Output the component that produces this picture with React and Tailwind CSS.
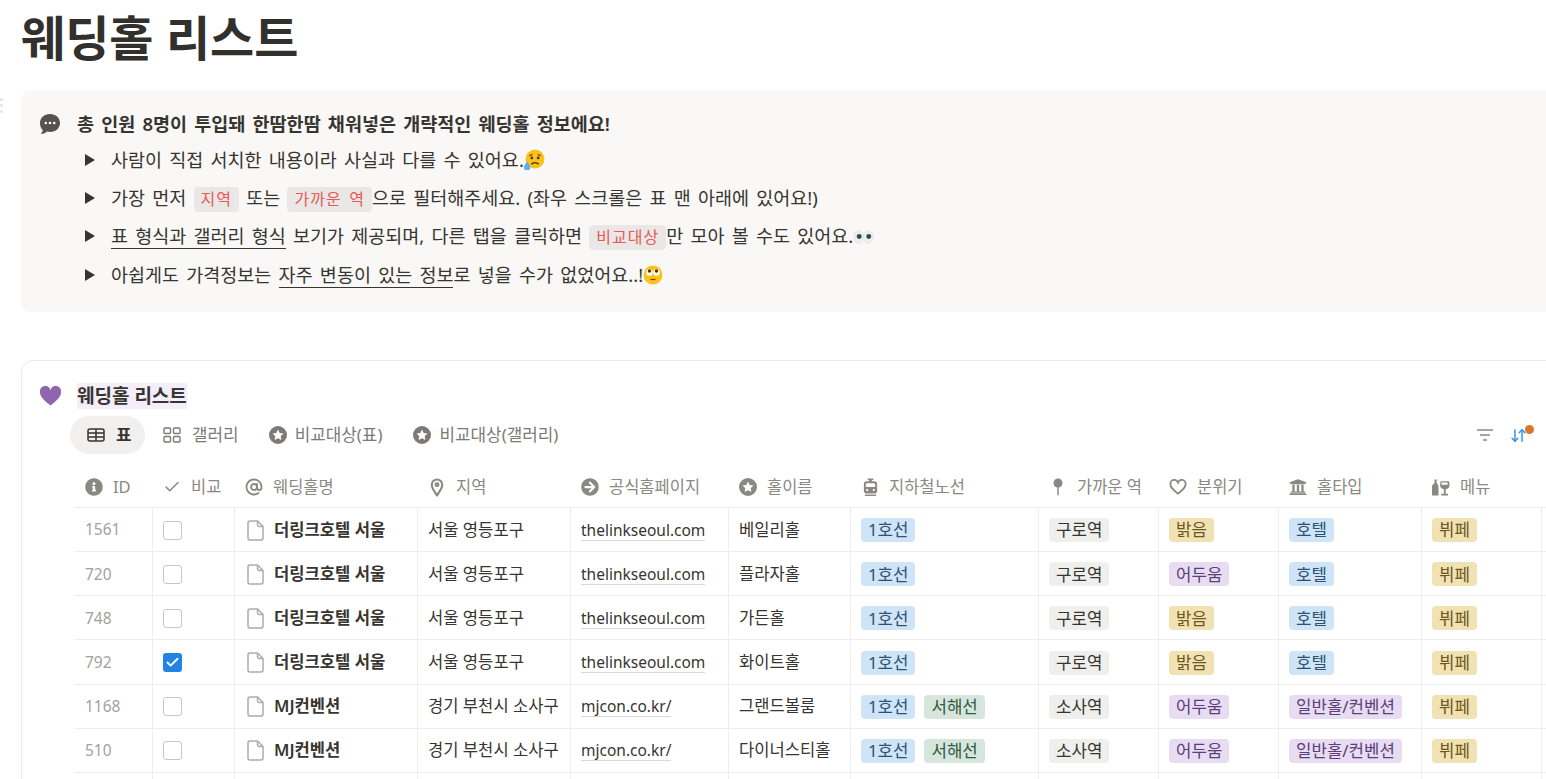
import { Check, AtSign, ArrowDownUp } from "lucide-react";
import { FaInfoCircle, FaArrowCircleRight, FaUniversity } from "react-icons/fa";

const font = { fontFamily: '"Noto Sans", "Noto Sans CJK KR", sans-serif' };

const StarCircle = ({ className }) => (
  <svg viewBox="0 0 18 18" className={className} fill="currentColor">
    <path fillRule="evenodd" d="M9 0a9 9 0 1 1 0 18A9 9 0 0 1 9 0Zm0 3.600 1.700 3.500 3.800.5-2.800 2.600.7 3.800L9 12.200 5.600 14l.7-3.800-2.800-2.600 3.800-.5L9 3.600Z" />
  </svg>
);

const TableIcon = () => (
  <svg viewBox="0 0 18 14" className="w-[18px] h-[14px]" fill="none" stroke="#37352f" strokeWidth="1.500">
    <rect x="1" y="1" width="16" height="12" rx="2" />
    <path d="M1 5h16M1 9h16M9 1v12" />
  </svg>
);

const GalleryIcon = () => (
  <svg viewBox="0 0 18 16" className="w-[18px] h-[16px]" fill="none" stroke="#7d7a75" strokeWidth="1.400">
    <rect x="1" y="1" width="6.500" height="5.500" rx="1" />
    <rect x="10.500" y="1" width="6.500" height="5.500" rx="1" />
    <rect x="1" y="9.500" width="6.500" height="5.500" rx="1" />
    <rect x="10.500" y="9.500" width="6.500" height="5.500" rx="1" />
  </svg>
);

const PinIcon = () => (
  <svg viewBox="0 0 14 20" className="w-[14px] h-[19px]" fill="none" stroke="currentColor" strokeWidth="2.200">
    <path d="M7 18.500C4.500 14 1.500 11 1.500 7a5.500 5.500 0 0 1 11 0c0 4-3 7-5.500 11.500Z" strokeLinejoin="round" />
    <circle cx="7" cy="7" r="1.500" />
  </svg>
);

const TrainIcon = () => (
  <svg viewBox="0 0 18 20" className="w-[17px] h-[20px]" fill="currentColor">
    <path fillRule="evenodd" d="M6 1h6v1.500h-1.500V4H13a3 3 0 0 1 3 3v7a3 3 0 0 1-3 3H5a3 3 0 0 1-3-3V7a3 3 0 0 1 3-3h2.500V2.500H6V1ZM4 7.500V10h10V7.500a1.500 1.500 0 0 0-1.500-1.500h-7A1.500 1.500 0 0 0 4 7.500ZM5.500 12a1.200 1.200 0 1 0 0 2.400 1.200 1.200 0 0 0 0-2.400Zm7 0a1.200 1.200 0 1 0 0 2.400 1.200 1.200 0 0 0 0-2.400Z" />
    <path d="M3 18h12v1.500H3z" />
  </svg>
);

const RoundPin = () => (
  <svg viewBox="0 0 12 20" className="w-[12px] h-[18px]" fill="currentColor">
    <circle cx="6" cy="5.500" r="5" />
    <rect x="5.200" y="9" width="1.600" height="10.500" rx="0.800" />
  </svg>
);

const HeartOutline = () => (
  <svg viewBox="0 0 20 18" className="w-[18px] h-[16px]" fill="none" stroke="currentColor" strokeWidth="2">
    <path d="M10 16.500C5 12.500 1.500 10 1.500 6A4.300 4.300 0 0 1 10 4.500 4.300 4.300 0 0 1 18.500 6c0 4-3.500 6.500-8.500 10.500Z" strokeLinejoin="round" />
  </svg>
);

const WineIcon = () => (
  <svg viewBox="0 0 20 20" className="w-[20px] h-[19px]" fill="currentColor">
    <path d="M2.800 1h2.400v4c0 1 2 1.500 2 3.500V18a1 1 0 0 1-1 1H1a1 1 0 0 1-1-1V8.500C0 6.500 2.800 6 2.800 5V1Z" />
    <path fillRule="evenodd" d="M9.500 3h9.500l.5 4a5 5 0 0 1-4.300 5v5h2.600v2H10.300v-2h2.900v-5a5 5 0 0 1-4.200-5l.5-4Zm1.300 1.500-.3 2.500h7l-.3-2.500h-6.400Z" />
  </svg>
);

const DocIcon = () => (
  <svg viewBox="0 0 17 21" className="w-[17px] h-[21px] shrink-0" fill="none" stroke="#aeaba6" strokeWidth="1.500">
    <path d="M3 1h7.500L16 6.500V18a2 2 0 0 1-2 2H3a2 2 0 0 1-2-2V3a2 2 0 0 1 2-2Z" strokeLinejoin="round" />
    <path d="M10.500 1v3.500a2 2 0 0 0 2 2H16" />
  </svg>
);

const SpeechIcon = () => (
  <svg viewBox="0 0 22 22" className="w-[22px] h-[22px] -ml-[1px]">
    <path d="M11 1c5.800 0 10 3.900 10 9s-4.200 9-10 9c-1 0-2-.1-3-.4C6.600 20 4.600 20.900 1.800 21c1-1 1.700-2.300 1.900-3.900C2 15.400 1 13 1 10c0-5.100 4.200-9 10-9Z" fill="#55534e" />
    <circle cx="6.800" cy="10" r="1.300" fill="#fff" />
    <circle cx="11" cy="10" r="1.300" fill="#fff" />
    <circle cx="15.200" cy="10" r="1.300" fill="#fff" />
  </svg>
);

const SadFace = () => (
  <svg viewBox="0 0 20 20" className="w-[21px] h-[21px] inline-block align-[-3px]">
    <circle cx="10.500" cy="9.500" r="9" fill="#fcc21b" />
    <path d="M5 6.500 8 5M16 6.500 13 5" stroke="#7a4a12" strokeWidth="1.200" fill="none" />
    <circle cx="7.500" cy="8.500" r="1.300" fill="#4a3413" />
    <circle cx="13.500" cy="8.500" r="1.300" fill="#4a3413" />
    <path d="M7 14.500c2-2 5-2 7 0" stroke="#4a3413" strokeWidth="1.400" fill="none" />
    <path d="M3 12c2 3 3 4 3 5.500a3 3 0 0 1-6 0C0 16 1.500 14 3 12Z" fill="#5fb0e8" />
  </svg>
);

const EyesEmoji = () => (
  <svg viewBox="0 0 22 14" className="w-[21px] h-[14px] inline-block align-[-1px]">
    <ellipse cx="6" cy="7" rx="5" ry="6.500" fill="#eceff1" stroke="#cfd4d8" strokeWidth="0.500" />
    <ellipse cx="16" cy="7" rx="5" ry="6.500" fill="#eceff1" stroke="#cfd4d8" strokeWidth="0.500" />
    <circle cx="6.500" cy="6.500" r="2.600" fill="#37474f" />
    <circle cx="16.500" cy="6.500" r="2.600" fill="#37474f" />
  </svg>
);

const RollFace = () => (
  <svg viewBox="0 0 20 20" className="w-[20px] h-[20px] inline-block align-[-3px]">
    <circle cx="10" cy="10" r="9.500" fill="#fcc21b" />
    <circle cx="6.500" cy="7.500" r="3.200" fill="#fff" />
    <circle cx="13.500" cy="7.500" r="3.200" fill="#fff" />
    <circle cx="6.500" cy="6" r="1.700" fill="#4a3413" />
    <circle cx="13.500" cy="6" r="1.700" fill="#4a3413" />
    <path d="M7.500 14.500h5" stroke="#7a4a12" strokeWidth="1.200" />
  </svg>
);

const Tri = () => (
  <svg viewBox="0 0 10 12" className="w-[10px] h-[12px] shrink-0">
    <path d="M0 0l10 6-10 6z" fill="#37352f" />
  </svg>
);

const Code = ({ children }) => (
  <span className="inline-block bg-[#e9e8e6] text-[#eb5757] rounded-[4px] px-[7px] h-[25px] leading-[24px] text-[16px] tracking-[1px]">{children}</span>
);

const U = ({ children }) => <span className="border-b border-[#37352f]">{children}</span>;

const colors = {
  blue: "bg-[#cfe4f6] text-[#2b5274]",
  green: "bg-[#d6e6dc] text-[#2f5a43]",
  gray: "bg-[#efefed] text-[#37352f]",
  yellow: "bg-[#f1e2b3] text-[#6d5620]",
  purple: "bg-[#e8dcf2] text-[#5b3f78]",
};

const Pill = ({ c, children }) => (
  <span className={`inline-flex items-center h-[24px] rounded-[4px] px-[7px] text-[16.8px] whitespace-nowrap ${colors[c]}`}>{children}</span>
);

const headers = [
  { w: "w-[78px]", icon: <FaInfoCircle className="w-[18px] h-[18px]" />, label: "ID" },
  { w: "w-[82px]", icon: <Check className="w-[20px] h-[20px]" strokeWidth={2} />, label: "비교" },
  { w: "w-[183px]", icon: <AtSign className="w-[18px] h-[18px]" strokeWidth={2.4} />, label: "웨딩홀명" },
  { w: "w-[153px]", icon: <PinIcon />, label: "지역" },
  { w: "w-[158px]", icon: <FaArrowCircleRight className="w-[18px] h-[18px]" />, label: "공식홈페이지" },
  { w: "w-[122px]", icon: <StarCircle className="w-[18px] h-[18px]" />, label: "홀이름" },
  { w: "w-[188px]", icon: <TrainIcon />, label: "지하철노선" },
  { w: "w-[120px]", icon: <RoundPin />, label: "가까운 역" },
  { w: "w-[120px]", icon: <HeartOutline />, label: "분위기" },
  { w: "w-[143px]", icon: <FaUniversity className="w-[18px] h-[18px]" />, label: "홀타입" },
  { w: "w-[120px]", icon: <WineIcon />, label: "메뉴" },
];

const link = { name: "더링크호텔 서울", area: "서울 영등포구", url: "thelinkseoul.com", lines: ["1호선"], station: "구로역", type: ["blue", "호텔"] };
const mj = { name: "MJ컨벤션", area: "경기 부천시 소사구", url: "mjcon.co.kr/", lines: ["1호선", "서해선"], station: "소사역", type: ["purple", "일반홀/컨벤션"] };

const rows = [
  { ...link, id: 1561, hall: "베일리홀", mood: "밝음" },
  { ...link, id: 720, hall: "플라자홀", mood: "어두움" },
  { ...link, id: 748, hall: "가든홀", mood: "밝음" },
  { ...link, id: 792, hall: "화이트홀", mood: "밝음", checked: true },
  { ...mj, id: 1168, hall: "그랜드볼룸", mood: "어두움" },
  { ...mj, id: 510, hall: "다이너스티홀", mood: "어두움" },
];

function Cell({ w, last, children }) {
  return (
    <div className={`${w} shrink-0 h-full flex items-center pl-[10px] pt-[1px] ${last ? "" : "border-r border-[#eeeeec]"}`}>{children}</div>
  );
}

function Row({ r }) {
  return (
    <div className="flex h-[44.17px] border-b border-[#eeeeec] text-[16.6px] text-[#37352f]">
      <Cell w="w-[78px]"><span className="text-[#a3a19c] text-[15.5px]">{r.id}</span></Cell>
      <Cell w="w-[82px]">
        {r.checked ? (
          <span className="w-[19px] h-[19px] rounded-[3px] bg-[#2383e2] flex items-center justify-center">
            <Check className="w-[15px] h-[15px] text-white" strokeWidth={3} />
          </span>
        ) : (
          <span className="w-[19px] h-[19px] rounded-[3px] border border-[#c9c7c3] bg-white" />
        )}
      </Cell>
      <Cell w="w-[183px]">
        <span className="flex items-center gap-[10px] pl-[2px]"><DocIcon /><span className="font-semibold whitespace-nowrap">{r.name}</span></span>
      </Cell>
      <Cell w="w-[153px]"><span className="whitespace-nowrap">{r.area}</span></Cell>
      <Cell w="w-[158px]"><span className="border-b border-[#d8d7d4] leading-[20px] text-[15.5px]">{r.url}</span></Cell>
      <Cell w="w-[122px]"><span className="whitespace-nowrap">{r.hall}</span></Cell>
      <Cell w="w-[188px]">
        <span className="flex gap-[9px]">
          <Pill c="blue">{r.lines[0]}</Pill>
          {r.lines[1] && <Pill c="green">{r.lines[1]}</Pill>}
        </span>
      </Cell>
      <Cell w="w-[120px]"><Pill c="gray">{r.station}</Pill></Cell>
      <Cell w="w-[120px]"><Pill c={r.mood === "밝음" ? "yellow" : "purple"}>{r.mood}</Pill></Cell>
      <Cell w="w-[143px]"><Pill c={r.type[0]}>{r.type[1]}</Pill></Cell>
      <Cell w="w-[120px]"><Pill c="yellow">뷔페</Pill></Cell>
      <Cell w="w-[120px]" last />
    </div>
  );
}

function EmptyRow() {
  return (
    <div className="flex h-[44.17px]">
      {headers.map((h) => <Cell key={h.label} w={h.w} />)}
    </div>
  );
}

function Bullet({ children, className }) {
  return (
    <div className={`flex items-center gap-[16px] pl-[64px] ${className}`}>
      <Tri />
      <div className="whitespace-nowrap">{children}</div>
    </div>
  );
}

export default function App() {
  return (
    <div className="w-[1546px] h-[779px] overflow-hidden bg-white text-[#37352f] pl-[21px] relative" style={font}>
      <h1 className="h-[90px] pt-[6px] text-[48px] leading-[64px] font-bold text-[#32302c] whitespace-nowrap">웨딩홀 리스트</h1>

      <span className="absolute left-0 top-[98px] flex flex-col gap-[3px]">
        {[0, 1, 2].map((i) => <span key={i} className="w-[3px] h-[3px] rounded-full bg-[#e3e2df]" />)}
      </span>

      <div className="w-[1600px] h-[222px] rounded-[10px] bg-[#f9f8f7] pt-[20px] text-[18.5px] [word-spacing:2.4px]">
        <div className="flex items-center gap-[16px] pl-[19px] h-[28px] font-semibold">
          <SpeechIcon />
          <span className="whitespace-nowrap">총 인원 8명이 투입돼 한땀한땀 채워넣은 개략적인 웨딩홀 정보에요!</span>
        </div>
        <Bullet className="h-[30px] mt-[7px]">사람이 직접 서치한 내용이라 사실과 다를 수 있어요.<SadFace /></Bullet>
        <Bullet className="h-[30px] mt-[8px]">가장 먼저 <Code>지역</Code> 또는 <Code>가까운 역</Code>으로 필터해주세요. (좌우 스크롤은 표 맨 아래에 있어요!)</Bullet>
        <Bullet className="h-[30px] mt-[8px]"><U>표 형식과 갤러리 형식</U> 보기가 제공되며, 다른 탭을 클릭하면 <Code>비교대상</Code>만 모아 볼 수도 있어요.<EyesEmoji /></Bullet>
        <Bullet className="h-[30px] mt-[9px]">아쉽게도 가격정보는 <U>자주 변동이 있는 정보</U>로 넣을 수가 없었어요..!<RollFace /></Bullet>
      </div>

      <div className="w-[1600px] mt-[48px] rounded-t-[12px] border border-[#e9e9e7] pl-[53px] pt-[22px]">
        <div className="flex items-center h-[26px]">
          <svg viewBox="0 0 22 20" className="w-[21px] h-[20px] -ml-[35px] mr-[16px]">
            <path d="M11 20C5 15 0 11 0 6a5.500 5.500 0 0 1 11-2 5.500 5.500 0 0 1 11 2c0 5-5 9-11 14Z" fill="#9065b0" />
          </svg>
          <span className="bg-[#f4eefa] font-bold text-[19px] leading-[26px] whitespace-nowrap">웨딩홀 리스트</span>
        </div>

        <div className="flex items-center h-[38px] mt-[7px] -ml-[5px] text-[16.9px] text-[#7d7a75] w-[1457px]">
          <div className="flex items-center gap-[11px] h-full w-[75px] pl-[17px] rounded-full bg-[#f1f0ef] text-[#37352f] font-semibold"><TableIcon />표</div>
          <div className="flex items-center gap-[11px] ml-[18px]"><GalleryIcon />갤러리</div>
          <div className="flex items-center gap-[8px] ml-[30px]"><StarCircle className="w-[18px] h-[18px]" />비교대상(표)</div>
          <div className="flex items-center gap-[8px] ml-[31px]"><StarCircle className="w-[18px] h-[18px]" />비교대상(갤러리)</div>
          <div className="ml-auto flex items-center gap-[17px] relative">
            <svg viewBox="0 0 16 12" className="w-[16px] h-[12px]" fill="none" stroke="#8a8883" strokeWidth="1.300">
              <path d="M0 1h16M3 6h10M6 11h4" />
            </svg>
            <ArrowDownUp className="w-[17px] h-[17px] text-[#2f8fe8]" strokeWidth={2} />
            <span className="absolute -right-[7px] -top-[2px] w-[9px] h-[9px] rounded-full bg-[#d9772f]" />
          </div>
        </div>

        <div className="flex h-[42px] mt-[12px] pt-[1px] border-b border-[#eeeeec] text-[16.5px] text-[#8a8883]">
          {headers.map((h) => (
            <div key={h.label} className={`${h.w} shrink-0 flex items-center gap-[10px] pl-[10px] whitespace-nowrap`}>
              <span className="w-[18px] flex justify-center">{h.icon}</span>
              {h.label}
            </div>
          ))}
        </div>
        {rows.map((r) => <Row key={r.id} r={r} />)}
        <EmptyRow />
      </div>
    </div>
  );
}
